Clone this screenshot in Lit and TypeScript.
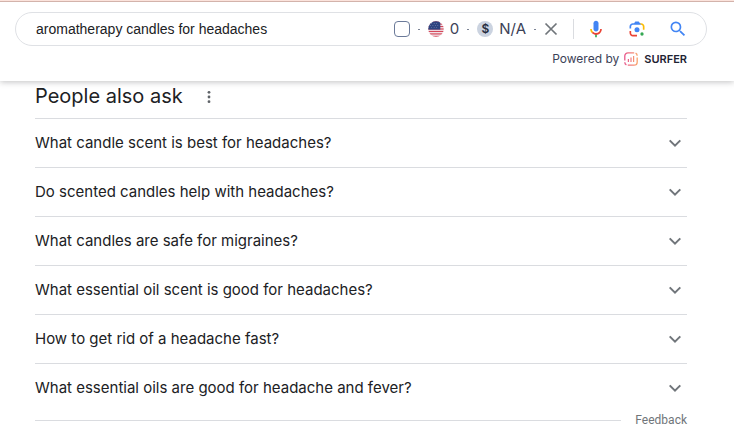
import { LitElement, html, css, svg } from "lit";
import { customElement, property, state } from "lit/decorators.js";

const QUESTIONS = [
  "What candle scent is best for headaches?",
  "Do scented candles help with headaches?",
  "What candles are safe for migraines?",
  "What essential oil scent is good for headaches?",
  "How to get rid of a headache fast?",
  "What essential oils are good for headache and fever?",
];

const flagStripes = [0, 2, 4, 6, 8, 10, 12].map(
  (row) => svg`<rect x="0" y=${row} width="13" height="1" fill="#d5485a"></rect>`
);

const flagIcon = html`<svg width="16" height="16" viewBox="0 0 13 13" aria-hidden="true">
  <defs><clipPath id="round"><circle cx="6.5" cy="6.5" r="6.3"></circle></clipPath></defs>
  <g clip-path="url(#round)">
    <rect width="13" height="13" fill="#f3eef2"></rect>
    ${flagStripes}
    <rect width="10" height="7" fill="#2f4480"></rect>
    <g fill="#8f9cc0">
      <circle cx="3" cy="2" r=".35"></circle><circle cx="5" cy="2" r=".35"></circle><circle cx="7" cy="2" r=".35"></circle>
      <circle cx="2" cy="3.7" r=".35"></circle><circle cx="4" cy="3.7" r=".35"></circle><circle cx="6" cy="3.7" r=".35"></circle><circle cx="8" cy="3.7" r=".35"></circle>
      <circle cx="3" cy="5.4" r=".35"></circle><circle cx="5" cy="5.4" r=".35"></circle><circle cx="7" cy="5.4" r=".35"></circle>
    </g>
  </g>
</svg>`;

const closeIcon = html`<svg width="14" height="14" viewBox="0 0 14 14" aria-hidden="true">
  <path d="M1.5 1.5 12.5 12.5M12.5 1.5 1.5 12.5" fill="none" stroke="#70757a" stroke-width="1.7"></path>
</svg>`;

const micIcon = html`<svg width="20" height="20" viewBox="0 0 24 24" aria-hidden="true">
  <path fill="#4285f4" d="m12 15c1.66 0 3-1.31 3-2.97v-7.02c0-1.66-1.34-3.01-3-3.01s-3 1.34-3 3.01v7.02c0 1.66 1.34 2.97 3 2.97z"></path>
  <path fill="#34a853" d="m11 18.08h2v3.92h-2z"></path>
  <path fill="#fbbc05" d="m7.05 16.87c-1.27-1.33-2.05-2.83-2.05-4.87h2c0 1.45 0.56 2.42 1.47 3.38v0.32l-1.15 1.18z"></path>
  <path fill="#ea4335" d="m12 16.93a4.97 5.25 0 0 1 -3.54 -1.55l-1.41 1.49c1.26 1.34 3.02 2.13 4.95 2.13 3.87 0 6.99-2.92 6.99-7h-1.99c0 2.92-2.24 4.93-5 4.93z"></path>
</svg>`;

const lensIcon = html`<svg width="20" height="20" viewBox="0 0 192 192" aria-hidden="true">
  <circle fill="#34a853" cx="144" cy="144" r="16"></circle>
  <circle fill="#4285f4" cx="96" cy="104" r="24"></circle>
  <path fill="#ea4335" d="M24,135.2c0,18.11,14.69,32.8,32.8,32.8H96v-16l-40.1-0.1c-8.8,0-15.9-8.19-15.9-17.9v-18H24V135.2z"></path>
  <path fill="#fbbc04" d="M168,72.8c0-18.11-14.69-32.8-32.8-32.8H116l20,16c8.8,0,16,8.29,16,18v30h16V72.8z"></path>
  <path fill="#4285f4" d="M112,24l-32,0L68,40H56.8C38.69,40,24,54.69,24,72.8V92h16V74c0-9.71,7.2-18,16-18h80L112,24z"></path>
</svg>`;

const searchIcon = html`<svg width="20" height="20" viewBox="0 0 24 24" aria-hidden="true">
  <path fill="#4285f4" d="M15.5 14h-.79l-.28-.27A6.471 6.471 0 0 0 16 9.5 6.5 6.5 0 1 0 9.5 16c1.61 0 3.09-.59 4.23-1.57l.27.28v.79l5 4.99L20.49 19l-4.99-5zm-6 0C7.01 14 5 11.99 5 9.5S7.01 5 9.5 5 14 7.01 14 9.5 11.99 14 9.5 14z"></path>
</svg>`;

const surferIcon = html`<svg width="14" height="14" viewBox="0 0 14 14" aria-hidden="true">
  <defs>
    <linearGradient id="warm" x1="0" y1="0" x2="1" y2="0">
      <stop offset="0" stop-color="#e8578c"></stop><stop offset="1" stop-color="#f9a36b"></stop>
    </linearGradient>
  </defs>
  <g fill="none" stroke="url(#warm)" stroke-width="1.3">
    <path d="M.8 8.4V4A3.2 3.2 0 0 1 4 .8h6.2M13.2 5.6V10a3.2 3.2 0 0 1-3.2 3.2H3.8"></path>
    <path d="M11.6 1.1a3 3 0 0 1 1.6 2.7M2.4 12.9A3 3 0 0 1 .8 10.2"></path>
  </g>
  <path d="M3.8 7h1.2v3H3.8z" fill="#ea6487"></path>
  <path d="M6.4 5.4h1.2V10H6.4z" fill="#f07c80"></path>
  <path d="M9 4h1.2v6H9z" fill="#f59175"></path>
</svg>`;

@customElement("search-header")
export class SearchHeader extends LitElement {
  static styles = css`
    :host {
      display: block;
      position: relative;
      border-top: 1px solid #fbe3dc;
      background: #fff;
      box-shadow: 0 1px 6px rgba(32, 33, 36, 0.28);
      font-family: Inter, "Liberation Sans", sans-serif;
      color: #3c4257;
    }
    .inner {
      padding: 10px 27px 13px 15px;
      border-top: 1px solid #d3b3ab;
    }
    .bar {
      display: flex;
      align-items: center;
      height: 34px;
      box-sizing: border-box;
      padding: 0 18px 0 20px;
      border: 1px solid #dfe1e5;
      border-radius: 17px;
    }
    .query {
      flex: 1;
      min-width: 0;
      padding: 0;
      border: 0;
      outline: 0;
      background: none;
      font: 14px/20px "Liberation Sans", Arial, sans-serif;
      color: #202124;
    }
    .tools,
    .metric {
      display: flex;
      align-items: center;
    }
    .tools {
      gap: 8px;
      font-size: 15px;
      line-height: 20px;
    }
    .metric {
      gap: 6px;
    }
    .check {
      appearance: none;
      width: 16px;
      height: 16px;
      margin: 0;
      border: 1px solid #6b7a99;
      border-radius: 4px;
    }
    .check:checked {
      background: #6b7a99;
    }
    .dot {
      width: 2px;
      height: 1px;
      background: #7c8496;
    }
    .coin {
      display: grid;
      place-items: center;
      width: 16px;
      height: 16px;
      border-radius: 50%;
      background: #cbd3e0;
      color: #252c3d;
      font-size: 12px;
      font-weight: 600;
      line-height: 16px;
    }
    .icon {
      display: grid;
      place-items: center;
      padding: 0;
      border: 0;
      background: none;
      cursor: pointer;
    }
    .actions {
      display: flex;
      align-items: center;
      gap: 21px;
      height: 20px;
      margin-left: 15px;
      padding-left: 12px;
      border-left: 1px solid #dadce0;
    }
    .powered {
      display: flex;
      justify-content: flex-end;
      align-items: center;
      gap: 5px;
      padding: 4px 20px 0 0;
      font-size: 12px;
      line-height: 18px;
    }
    .brand {
      display: flex;
      align-items: center;
      gap: 6px;
      font-size: 11px;
      font-weight: 600;
      color: #1f2333;
      text-decoration: none;
    }
  `;

  render() {
    return html`
      <div class="inner">
        <div class="bar" role="search">
          <input class="query" type="text" aria-label="Search" value="aromatherapy candles for headaches" />
          <div class="tools">
            <input class="check" type="checkbox" aria-label="Save keyword" />
            <span class="dot"></span>
            <span class="metric">${flagIcon}<span>0</span></span>
            <span class="dot"></span>
            <span class="metric"><span class="coin">$</span><span>N/A</span></span>
            <span class="dot"></span>
            <button class="icon" aria-label="Clear">${closeIcon}</button>
          </div>
          <div class="actions">
            <button class="icon" aria-label="Search by voice">${micIcon}</button>
            <button class="icon" aria-label="Search by image">${lensIcon}</button>
            <button class="icon" aria-label="Search">${searchIcon}</button>
          </div>
        </div>
        <div class="powered">
          <span>Powered by</span>
          <a class="brand" href="#">${surferIcon}<span>SURFER</span></a>
        </div>
      </div>
    `;
  }
}

@customElement("question-row")
export class QuestionRow extends LitElement {
  static styles = css`
    :host {
      display: block;
      border-top: 1px solid #dadce0;
    }
    .row {
      display: flex;
      align-items: center;
      justify-content: space-between;
      width: 100%;
      height: 48px;
      padding: 0 4px 0 0;
      border: 0;
      background: none;
      font-family: inherit;
      font-size: 15px;
      line-height: 24px;
      color: #202124;
      text-align: left;
      cursor: pointer;
    }
    .open .chevron {
      transform: rotate(180deg);
    }
  `;

  @property() question = "";
  @state() private open = false;

  render() {
    return html`<button
      class="row ${this.open ? "open" : ""}"
      aria-expanded=${this.open}
      @click=${() => (this.open = !this.open)}
    >
      <span>${this.question}</span>
      <svg class="chevron" width="16" height="16" viewBox="0 0 16 16" aria-hidden="true">
        <path d="M2.7 5.4 8 10.7l5.3-5.3" fill="none" stroke="#70757a" stroke-width="2"></path>
      </svg>
    </button>`;
  }
}

@customElement("app-root")
export class AppRoot extends LitElement {
  static styles = css`
    :host {
      display: block;
      min-height: 100vh;
      background: #fff;
      font-family: Inter, "Open Sans", sans-serif;
      color: #202124;
    }
    .results {
      padding: 0 47px 16px 35px;
    }
    .heading {
      display: flex;
      align-items: center;
      gap: 18px;
      height: 37px;
    }
    .title {
      margin: 0;
      padding-bottom: 8px;
      font-size: 20px;
      font-weight: 400;
      line-height: 28px;
    }
    .more {
      display: grid;
      place-items: center;
      padding: 0 0 5px;
      border: 0;
      background: none;
    }
    .footer {
      display: flex;
      align-items: center;
      gap: 14px;
    }
    .rule {
      flex: 1;
      height: 1px;
      background: #dadce0;
    }
    .feedback {
      font: 12px/16px Roboto, sans-serif;
      color: #70757a;
      text-decoration: none;
    }
  `;

  render() {
    return html`
      <search-header></search-header>
      <main class="results">
        <div class="heading">
          <h2 class="title">People also ask</h2>
          <button class="more" aria-label="About this result">
            <svg width="16" height="16" viewBox="0 0 16 16" fill="#5f6368" aria-hidden="true">
              <circle cx="8" cy="3.3" r="1.4"></circle>
              <circle cx="8" cy="8" r="1.4"></circle>
              <circle cx="8" cy="12.7" r="1.4"></circle>
            </svg>
          </button>
        </div>
        ${QUESTIONS.map((q) => html`<question-row .question=${q}></question-row>`)}
        <div class="footer">
          <span class="rule"></span>
          <a class="feedback" href="#">Feedback</a>
        </div>
      </main>
    `;
  }
}
